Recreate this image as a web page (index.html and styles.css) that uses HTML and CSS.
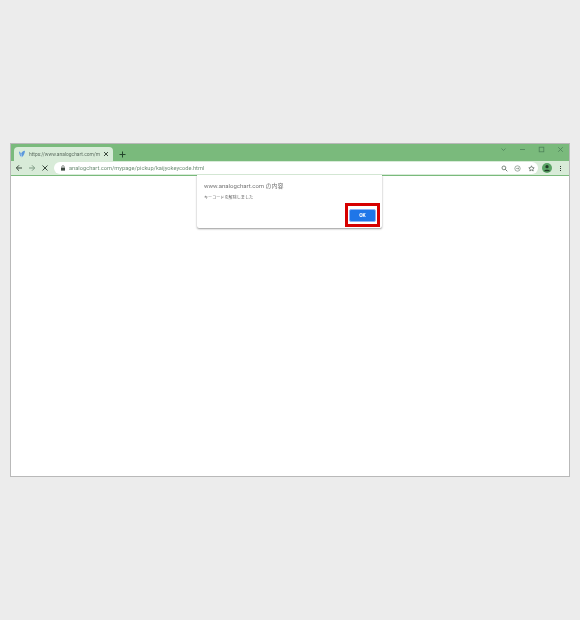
FILE: index.html
```html
<!DOCTYPE html>
<html lang="ja">
<head>
    <meta charset="UTF-8">
    <meta name="viewport" content="width=device-width, initial-scale=1.0">
    <title>analogchart</title>
    <link rel="stylesheet" href="styles.css">
</head>
<body>

    <div class="window">
        <div class="titlebar">
            <div class="tab">
                <svg class="favicon" viewBox="0 0 8 8"><path d="M1 1.500c1 0 1.600 1 2 2.400C3.500 2.500 5 1 7 .8 6.800 3 6 6 3.600 7.200 2 6.500 1.200 4 1 1.500z" fill="#5b98dc"/><path d="M3 3.900c.3 1 .5 2 .6 3.300" stroke="#c2dcf0" stroke-width=".8" fill="none"/></svg>
                <span class="tab-title">https://www.analogchart.com/m</span>
                <svg class="tab-close" viewBox="0 0 6 6"><path d="M1 1l4 4M5 1L1 5" stroke="#3c4a3e" stroke-width="1" fill="none"/></svg>
            </div>
            <svg class="new-tab" viewBox="0 0 7 7"><path d="M3.500.5v6M.5 3.500h6" stroke="#24452b" stroke-width="1" fill="none"/></svg>
            <div class="window-buttons">
                <svg viewBox="0 0 7 7"><path d="M1.500 2.500l2 2 2-2" stroke="#4d8259" stroke-width=".8" fill="none"/></svg>
                <svg viewBox="0 0 7 7"><path d="M1 3.500h5" stroke="#4d8259" stroke-width=".8" fill="none"/></svg>
                <svg viewBox="0 0 7 7"><rect x="1.200" y="1.200" width="4.600" height="4.600" stroke="#4d8259" stroke-width=".8" fill="none"/></svg>
                <svg viewBox="0 0 7 7"><path d="M1.200 1.200l4.600 4.600M5.800 1.200L1.200 5.800" stroke="#4d8259" stroke-width=".8" fill="none"/></svg>
            </div>
        </div>
        <div class="toolbar">
            <svg class="nav" viewBox="0 0 8 8"><path d="M7 4H1.500M4 1.300L1.300 4 4 6.700" stroke="#3a4a3e" stroke-width="1" fill="none"/></svg>
            <svg class="nav" viewBox="0 0 8 8"><path d="M1 4h5.500M4 1.300L6.700 4 4 6.700" stroke="#7d9a83" stroke-width="1" fill="none"/></svg>
            <svg class="nav" viewBox="0 0 8 8"><path d="M1.500 1.500l5 5M6.500 1.500l-5 5" stroke="#3a4a3e" stroke-width="1" fill="none"/></svg>
            <div class="omnibox">
                <svg class="lock" viewBox="0 0 6 6"><path d="M1 2.600h4v3H1z" fill="#3f4a42"/><path d="M1.900 2.600V1.700a1.100 1.100 0 0 1 2.200 0v.9" stroke="#3f4a42" stroke-width=".6" fill="none"/></svg>
                <span class="url">analogchart.com/mypage/pickup/kaijyokeycode.html</span>
                <svg class="omni-icon" viewBox="0 0 7 7"><circle cx="2.900" cy="2.900" r="1.900" stroke="#5a6b5e" stroke-width=".8" fill="none"/><path d="M4.300 4.300l2 2" stroke="#5a6b5e" stroke-width=".9"/></svg>
                <svg class="omni-icon" viewBox="0 0 7 7"><circle cx="3.500" cy="3.500" r="2.700" stroke="#7a8a7e" stroke-width=".7" fill="none"/><path d="M2 3.500h3M3.800 2.500l1.200 1-1.200 1" stroke="#7a8a7e" stroke-width=".6" fill="none"/></svg>
                <svg class="omni-icon" viewBox="0 0 7 7"><path d="M3.500.8l.8 1.800 1.900.2-1.400 1.300.4 1.900-1.700-1-1.700 1 .4-1.900L.8 2.800l1.900-.2z" stroke="#4f5f53" stroke-width=".7" fill="none"/></svg>
            </div>
            <div class="avatar">
                <svg viewBox="0 0 8 8"><circle cx="4" cy="2.900" r="1.300" fill="#1f3a26"/><path d="M1.700 6.500c.3-1.400 4.300-1.400 4.600 0z" fill="#1f3a26"/></svg>
            </div>
            <div class="menu-dots"><i></i><i></i><i></i></div>
        </div>
        <div class="page"></div>

        <div class="alert">
            <p class="alert-host">www.analogchart.com の内容</p>
            <p class="alert-msg">キーコードを解除しました</p>
            <div class="alert-actions">
                <div class="highlight">
                    <button class="ok">OK</button>
                </div>
            </div>
        </div>
    </div>

</body>
</html>
```

FILE: styles.css
```css
body {
    margin: 0;
    height: 620px;
    box-sizing: border-box;
    padding: 143px 10px 0;
    background-color: #ececec;
    font-family: "Roboto", "Noto Sans CJK JP", sans-serif;
    overflow: hidden;
}
svg {
    display: block;
}
.window {
    position: relative;
    height: 334px;
    box-sizing: border-box;
    border: 1px solid #b9b9b9;
    display: flex;
    flex-direction: column;
    background-color: #fff;
    filter: blur(0.3px);
}
.titlebar {
    height: 17px;
    background-color: #7aba7c;
    display: flex;
    align-items: flex-end;
    padding-left: 3px;
}
.tab {
    width: 99px;
    height: 14px;
    background-color: #d8ebd8;
    border-radius: 4px 4px 0 0;
    display: flex;
    align-items: center;
    padding-left: 4px;
    box-sizing: border-box;
}
.favicon {
    width: 8px;
    height: 8px;
    margin-right: 3px;
}
.tab-title {
    width: 74px;
    white-space: nowrap;
    font-size: 4.900px;
    color: #5d6d61;
}
.tab-close {
    width: 6px;
    height: 6px;
}
.new-tab {
    width: 7px;
    height: 7px;
    margin: 0 0 3px 6px;
}
.window-buttons {
    margin-left: auto;
    align-self: flex-start;
    display: flex;
    gap: 12px;
    padding: 2px 5px 0 0;
}
.window-buttons svg {
    width: 7px;
    height: 7px;
}
.toolbar {
    height: 14px;
    background-color: #d8ebd8;
    border-bottom: 1px solid #7aba7c;
    display: flex;
    align-items: center;
    padding: 0 7px 0 4px;
}
.nav {
    width: 8px;
    height: 8px;
    margin-right: 5px;
}
.omnibox {
    flex: 1;
    height: 12px;
    background-color: #fff;
    border-radius: 6px;
    display: flex;
    align-items: center;
    padding: 0 3.500px 0 6px;
}
.lock {
    width: 6px;
    height: 6px;
    margin-right: 3px;
}
.url {
    font-size: 5.700px;
    color: #6f8f77;
    white-space: nowrap;
    margin-right: auto;
}
.omni-icon {
    width: 7px;
    height: 7px;
    margin-left: 6.500px;
}
.avatar {
    width: 10px;
    height: 10px;
    border-radius: 50%;
    background-color: #5aa465;
    margin-left: 4px;
}
.avatar svg {
    width: 10px;
    height: 10px;
}
.menu-dots {
    width: 3px;
    display: flex;
    flex-direction: column;
    align-items: center;
    gap: 1px;
    margin-left: 7px;
}
.menu-dots i {
    width: 1px;
    height: 1px;
    background-color: #2c3a30;
}
.page {
    flex: 1;
}
.alert {
    position: absolute;
    left: 186px;
    top: 31px;
    width: 185px;
    height: 53px;
    box-sizing: border-box;
    background-color: #fff;
    border-radius: 0 0 2px 2px;
    box-shadow: 0 1px 2px rgba(0, 0, 0, 0.4);
    padding: 6px 2px 0 7px;
}
.alert p {
    margin: 0;
    color: #757575;
}
.alert-host {
    font-size: 6px;
    line-height: 9px;
}
.alert .alert-msg {
    font-size: 4.100px;
    line-height: 7px;
    margin-top: 4px;
    color: #5f5f5f;
}
.alert-actions {
    display: flex;
    justify-content: flex-end;
    margin-top: 2px;
}
.highlight {
    width: 35px;
    height: 24px;
    box-sizing: border-box;
    border: 3px solid #d60000;
    display: flex;
    align-items: center;
    justify-content: center;
}
.ok {
    width: 27px;
    height: 13px;
    padding: 0;
    border: 1px solid #8fb4f5;
    border-radius: 2px;
    background-color: #1f76e8;
    color: #fff;
    font-family: inherit;
    font-size: 5px;
    font-weight: bold;
}
```
